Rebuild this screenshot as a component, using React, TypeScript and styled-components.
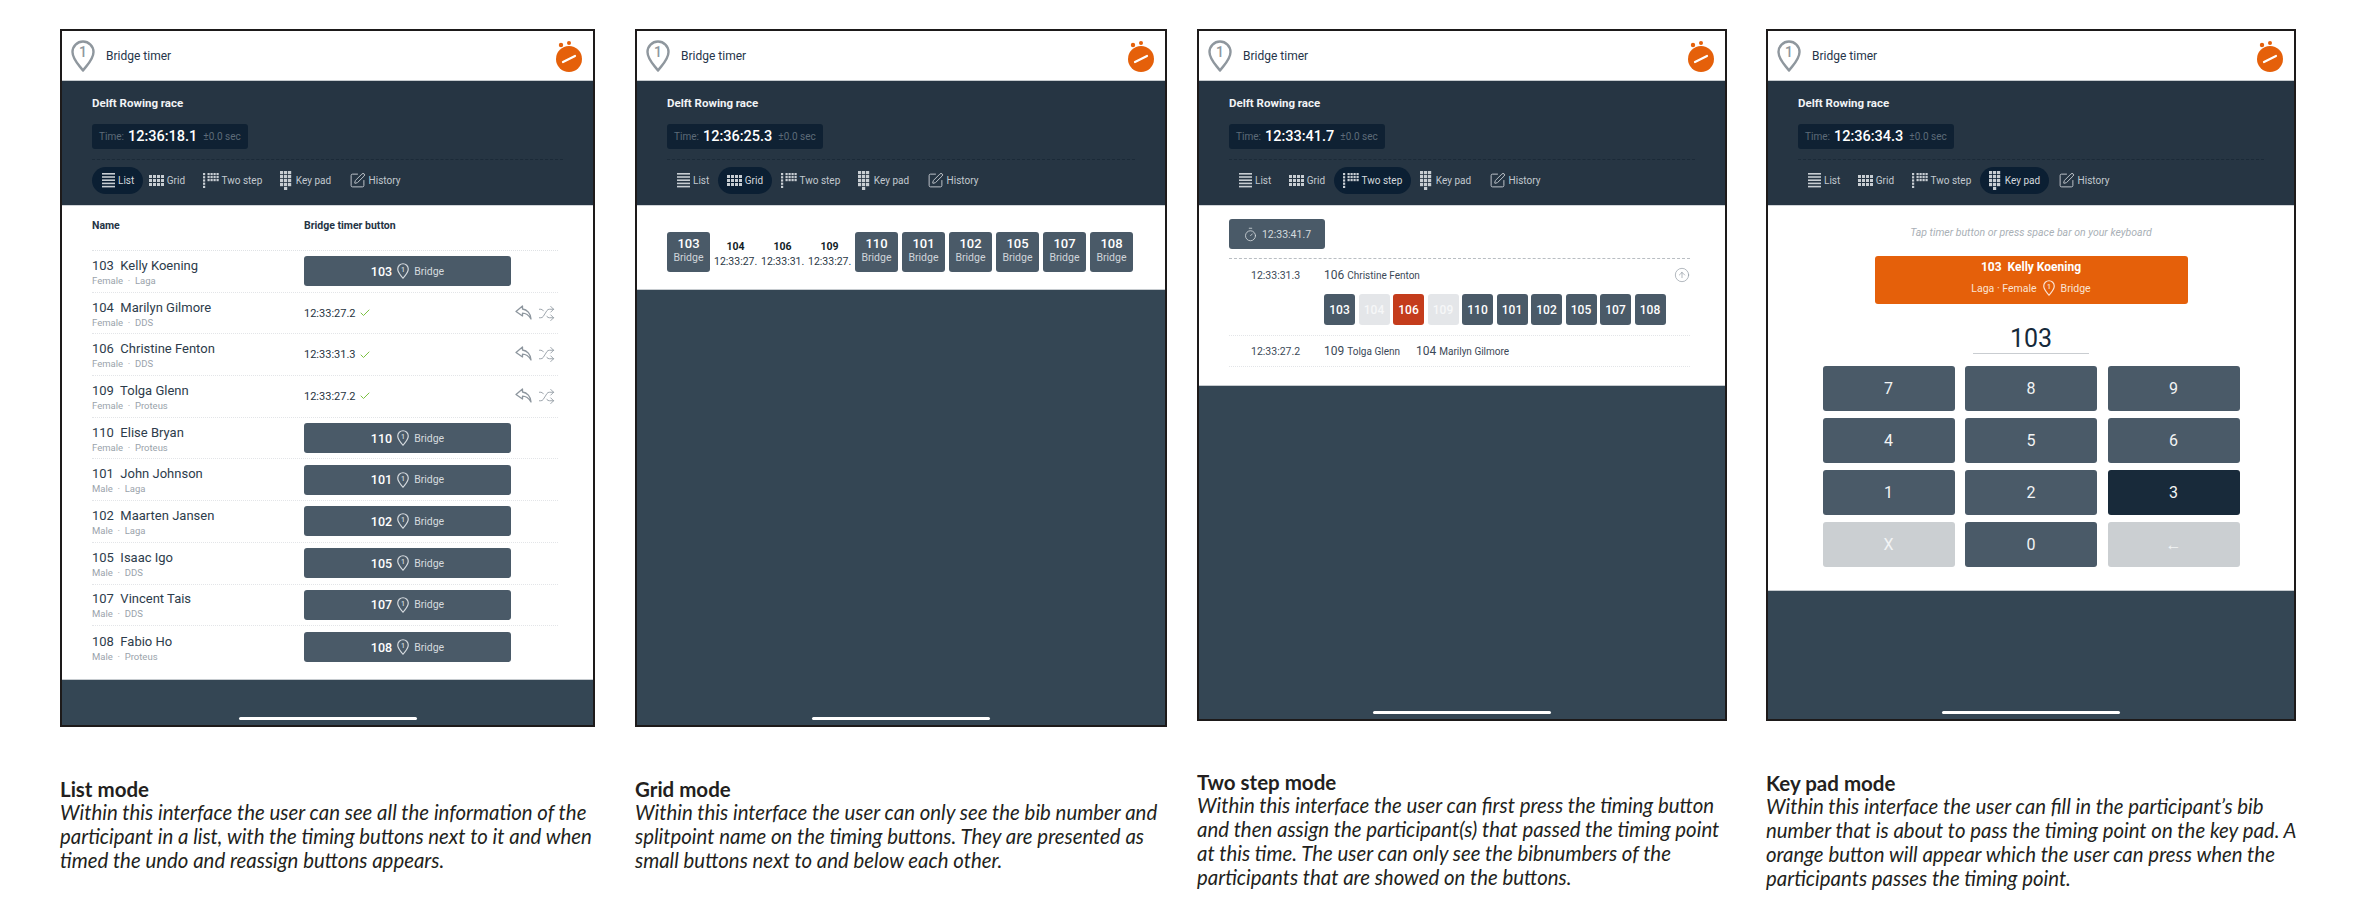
import React from "react";
import styled, { createGlobalStyle } from "styled-components";
import { Check, CircleArrowUp, Shuffle, SquarePen, Timer } from "lucide-react";

const GlobalStyle = createGlobalStyle`
  html, body {
    margin: 0;
    padding: 0;
    background: #fff;
    font-family: Roboto, "Liberation Sans", sans-serif;
  }
  * { box-sizing: border-box; }
`;

type ModeId = "list" | "grid" | "two" | "keypad";

type Participant = {
  bib: number;
  name: string;
  info: string;
  timed?: string;
};

const participants: Participant[] = [
  { bib: 103, name: "Kelly Koening", info: "Female  ·  Laga" },
  { bib: 104, name: "Marilyn Gilmore", info: "Female  ·  DDS", timed: "12:33:27.2" },
  { bib: 106, name: "Christine Fenton", info: "Female  ·  DDS", timed: "12:33:31.3" },
  { bib: 109, name: "Tolga Glenn", info: "Female  ·  Proteus", timed: "12:33:27.2" },
  { bib: 110, name: "Elise Bryan", info: "Female  ·  Proteus" },
  { bib: 101, name: "John Johnson", info: "Male  ·  Laga" },
  { bib: 102, name: "Maarten Jansen", info: "Male  ·  Laga" },
  { bib: 105, name: "Isaac Igo", info: "Male  ·  DDS" },
  { bib: 107, name: "Vincent Tais", info: "Male  ·  DDS" },
  { bib: 108, name: "Fabio Ho", info: "Male  ·  Proteus" },
];

const Page = styled.div`
  display: flex;
  align-items: flex-start;
  width: 2361px;
  height: 923px;
  padding: 29px 0 0 60px;
  overflow: hidden;
`;

const Column = styled.section<{ $width: number; $after: number }>`
  flex: none;
  width: ${(p) => p.$width}px;
  margin-right: ${(p) => p.$after}px;
`;

const Frame = styled.div<{ $height: number }>`
  display: flex;
  flex-direction: column;
  height: ${(p) => p.$height}px;
  border: 2px solid #1d1a1a;
  background: #344654;
`;

const TopBar = styled.header`
  display: flex;
  align-items: center;
  flex: none;
  height: 50px;
  padding: 0 9px 0 9px;
  background: #fff;
  border-bottom: 1px solid #c6cbcf;
`;

const TopTitle = styled.span`
  margin-left: 11px;
  flex: 1;
  font-size: 12px;
  font-weight: 400;
  color: #26354a;
`;

const RaceHeader = styled.div`
  flex: none;
  height: 125px;
  padding: 14px 30px 0;
  background: #263543;
  border-bottom: 1px solid #d0d4d8;
`;

const RaceTitle = styled.div`
  font-size: 11.5px;
  line-height: 16px;
  font-weight: 700;
  color: #f1f3f5;
`;

const TimeBox = styled.div`
  display: inline-flex;
  align-items: center;
  height: 25px;
  margin-top: 13px;
  padding: 0 7px;
  border-radius: 3px;
  background: #0f2133;
  font-size: 10px;
  color: #5d6b78;
`;

const TimeValue = styled.strong`
  margin: 0 6px 0 4px;
  font-size: 14.5px;
  font-weight: 500;
  color: #fff;
`;

const Divider = styled.div`
  height: 1px;
  margin-top: 10px;
  border-top: 1px dashed #1b2a38;
`;

const Tabs = styled.nav`
  display: flex;
  margin-top: 7px;
`;

const Tab = styled.div<{ $active: boolean }>`
  display: flex;
  align-items: center;
  gap: 3px;
  height: 27px;
  padding: 0 9px 0 8.5px;
  border-radius: 14px;
  font-size: 10px;
  color: ${(p) => (p.$active ? "#d4d9dd" : "#c2c9cf")};
  background: ${(p) => (p.$active ? "#0b1f33" : "transparent")};
  svg {
    flex: none;
  }
  &:first-child {
    padding-left: 10px;
    margin-right: ${(p) => (p.$active ? "-3px" : "0")};
  }
`;

const Content = styled.main`
  flex: none;
  background: #fff;
  border-bottom: 1px solid #c6cbcf;
`;

const Footer = styled.footer`
  flex: 1;
  display: flex;
  align-items: flex-end;
  justify-content: center;
  padding-bottom: 5px;
`;

const HomeBar = styled.div`
  width: 178px;
  height: 3px;
  border-radius: 2px;
  background: #fff;
`;

/* list mode */
const ListWrap = styled.div`
  height: 473px;
  padding: 0 35px 0 30px;
`;

const ListHead = styled.div`
  display: grid;
  grid-template-columns: 212px 1fr;
  align-items: center;
  height: 45px;
  padding-bottom: 6px;
  border-bottom: 1px dotted #dfe2e5;
  font-size: 10.5px;
  font-weight: 700;
  color: #253445;
`;

const Row = styled.div`
  display: grid;
  grid-template-columns: 212px 207px 1fr;
  align-items: center;
  height: 41.7px;
  border-bottom: 1px dotted #e3e5e8;
  &:last-child {
    border-bottom: 0;
  }
`;

const RowName = styled.div`
  padding-top: 2px;
  font-size: 13px;
  line-height: 16px;
  color: #2d3c4b;
  white-space: pre;
`;

const RowInfo = styled.div`
  font-size: 9.5px;
  line-height: 12px;
  margin-top: 1px;
  color: #9aa3ab;
  white-space: pre;
`;

const TimingButton = styled.div`
  display: flex;
  align-items: center;
  justify-content: center;
  gap: 5px;
  height: 30px;
  border-radius: 3px;
  background: #4a5a68;
  font-size: 10.5px;
  color: #d5dade;
  b {
    font-size: 12.5px;
    font-weight: 500;
    color: #fff;
  }
`;

const TimedText = styled.div`
  display: flex;
  align-items: center;
  gap: 3px;
  font-size: 11px;
  color: #26343f;
  svg {
    color: #7cc242;
  }
`;

const RowActions = styled.div`
  display: flex;
  justify-content: flex-end;
  gap: 6px;
  padding-right: 3px;
  color: #8d969e;
`;

/* grid mode */
const GridWrap = styled.div`
  display: flex;
  gap: 4px;
  height: 83px;
  padding: 26px 0 0 30px;
`;

const GridButton = styled.div`
  flex: none;
  width: 43px;
  height: 40px;
  padding-top: 4px;
  border-radius: 3px;
  background: #4a5a68;
  text-align: center;
  font-size: 10.5px;
  line-height: 13px;
  color: #cfd5da;
  b {
    display: block;
    font-size: 13px;
    line-height: 15px;
    font-weight: 500;
    color: #fff;
  }
`;

const GridTimed = styled.div`
  flex: none;
  width: 43px;
  padding-top: 8px;
  overflow: hidden;
  text-align: center;
  white-space: nowrap;
  font-size: 10.5px;
  line-height: 13px;
  color: #2a3845;
  b {
    display: block;
    margin-bottom: 2px;
    font-size: 10.5px;
    color: #111c26;
  }
`;

/* two step mode */
const TwoWrap = styled.div`
  height: 179px;
  padding: 13px 35px 0 30px;
`;

const StartButton = styled.div`
  display: flex;
  align-items: center;
  justify-content: center;
  gap: 4px;
  width: 96px;
  height: 30px;
  border-radius: 3px;
  background: #4a5a68;
  font-size: 10.5px;
  color: #d5dade;
`;

const DashLine = styled.div`
  margin-top: 9px;
  border-top: 1px dashed #b9bec3;
`;

const StepRow = styled.div`
  display: grid;
  grid-template-columns: 95px 1fr auto;
  align-items: center;
  padding-top: 8px;
  font-size: 10.5px;
  color: #3b4957;
`;

const StepTime = styled.div`
  padding-left: 22px;
  font-size: 10.5px;
  color: #3b4957;
`;

const StepNames = styled.div`
  display: flex;
  gap: 16px;
  font-size: 10px;
  color: #3b4957;
  b {
    font-size: 12px;
    font-weight: 400;
    margin-right: 3px;
  }
`;

const BibRow = styled.div`
  display: flex;
  gap: 3.5px;
  margin: 11px 0 0 95px;
  padding-bottom: 10px;
`;

const StepLine = styled.div`
  border-top: 1px dotted #e3e5e8;
`;

const Bib = styled.div<{ $tone: "normal" | "done" | "picked" }>`
  display: flex;
  align-items: center;
  justify-content: center;
  width: 31px;
  height: 31px;
  border-radius: 3px;
  font-size: 12px;
  font-weight: 500;
  color: ${(p) => (p.$tone === "done" ? "#f6f7f8" : "#fff")};
  background: ${(p) =>
    p.$tone === "done" ? "#e4e6e9" : p.$tone === "picked" ? "#c43c1c" : "#4a5a68"};
`;

const StepLastRow = styled(StepRow)`
  height: 31px;
  padding-top: 0;
  border-bottom: 1px dotted #e3e5e8;
`;

/* key pad mode */
const PadWrap = styled.div`
  height: 384px;
  padding-top: 20px;
  display: flex;
  flex-direction: column;
  align-items: center;
`;

const PadHint = styled.div`
  font-size: 10.5px;
  line-height: 14px;
  font-style: italic;
  color: #a9b0b6;
`;

const OrangeButton = styled.div`
  width: 313px;
  height: 48px;
  margin-top: 16px;
  padding-top: 3px;
  border-radius: 3px;
  background: #e5600a;
  text-align: center;
  color: #fff;
`;

const OrangeName = styled.div`
  font-size: 12px;
  line-height: 16px;
  font-weight: 700;
  white-space: pre;
`;

const OrangeInfo = styled.div`
  display: flex;
  align-items: center;
  justify-content: center;
  gap: 6px;
  margin-top: 5px;
  font-size: 10.5px;
  color: #fbe3d3;
`;

const PadInput = styled.div`
  display: flex;
  align-items: flex-end;
  justify-content: center;
  width: 116px;
  height: 40px;
  margin-top: 10px;
  border-bottom: 1px solid #c9cdd1;
  font-size: 25px;
  line-height: 28px;
  color: #16293a;
`;

const PadKeys = styled.div`
  display: grid;
  grid-template-columns: repeat(3, 132px);
  gap: 7.5px 10.5px;
  margin-top: 12px;
`;

const PadKey = styled.div<{ $tone: "normal" | "off" | "pressed" }>`
  display: flex;
  align-items: center;
  justify-content: center;
  height: 44.5px;
  border-radius: 3px;
  font-size: 16px;
  color: #f2f4f5;
  background: ${(p) =>
    p.$tone === "off" ? "#cbcfd2" : p.$tone === "pressed" ? "#182a3a" : "#4a5a68"};
`;

/* captions */
const Caption = styled.div<{ $top: number }>`
  margin-top: ${(p) => p.$top}px;
  font-family: Lato, "Open Sans", sans-serif;
  color: #231f20;
  white-space: nowrap;
`;

const CaptionTitle = styled.div`
  font-size: 20.5px;
  line-height: 24px;
  font-weight: 700;
`;

const CaptionBody = styled.div`
  font-size: 20.4px;
  line-height: 23.9px;
  font-style: italic;
`;

const PinIcon: React.FC<{ size?: number; color?: string }> = ({ size = 16, color = "#fff" }) => (
  <svg width={(size * 3) / 4} height={size} viewBox="0 0 24 32" fill="none">
    <path
      d="M12 30.5 C8 25 1.5 19.5 1.5 12 A10.5 10.5 0 0 1 22.5 12 C22.5 19.5 16 25 12 30.5 Z"
      stroke={color}
      strokeWidth="2.4"
      strokeLinejoin="round"
    />
    <text x="12" y="17" textAnchor="middle" fontSize="14" fontWeight="500" fontFamily="Roboto, sans-serif" fill={color}>
      1
    </text>
  </svg>
);

const StopwatchLogo = () => (
  <svg width="30" height="34" viewBox="0 0 30 34">
    <circle cx="15" cy="20" r="13" fill="#e5600a" />
    <circle cx="7" cy="6" r="2.2" fill="#e5600a" />
    <circle cx="15" cy="4" r="2" fill="#e5600a" />
    <path d="M9 23 L21 17" stroke="#fff" strokeWidth="2.2" strokeLinecap="round" />
  </svg>
);

const UndoIcon = () => (
  <svg width="17" height="15" viewBox="0 0 17 15" fill="none" stroke="currentColor" strokeWidth="1.3" strokeLinejoin="round">
    <path d="M7.5 1 L1 6.5 L7.5 11 V8.2 C10.8 8.2 13.6 10 16 14 C15.8 8.5 12 4.6 7.5 4 Z" />
  </svg>
);

const Squares: React.FC<{ cells: [number, number][]; size: number; w: number; h: number }> = ({ cells, size, w, h }) => (
  <svg width={w} height={h} viewBox={`0 0 ${w} ${h}`} fill="#c8ced3">
    {cells.map(([x, y]) => (
      <rect key={`${x}-${y}`} x={x} y={y} width={size} height={size} />
    ))}
  </svg>
);

const makeCells = (cols: number, rows: number, step: number, ox = 0, oy = 0) => {
  const out: [number, number][] = [];
  for (let r = 0; r < rows; r++) {
    for (let c = 0; c < cols; c++) out.push([ox + c * step, oy + r * step]);
  }
  return out;
};

const ListIcon = () => (
  <svg width="13" height="16" viewBox="0 0 13 16" fill="#c8ced3">
    {[0, 3.2, 6.4, 9.6, 12.8].map((y) => (
      <rect key={y} x="0" y={y} width="13" height="1.6" />
    ))}
  </svg>
);

const GridIcon = () => <Squares cells={makeCells(4, 3, 4, 0, 0)} size={3} w={15} h={11} />;

const TwoStepIcon = () => (
  <Squares
    cells={[
      ...makeCells(1, 5, 3.2, 0, 0),
      ...makeCells(4, 3, 3, 4.5, 0),
    ]}
    size={2.2}
    w={16}
    h={16}
  />
);

const KeyPadIcon = () => (
  <Squares cells={[...makeCells(3, 4, 4, 0, 0), [4, 16]]} size={3.2} w={13} h={19} />
);

const tabs: { id: ModeId | "history"; label: string; icon: React.ReactNode }[] = [
  { id: "list", label: "List", icon: <ListIcon /> },
  { id: "grid", label: "Grid", icon: <GridIcon /> },
  { id: "two", label: "Two step", icon: <TwoStepIcon /> },
  { id: "keypad", label: "Key pad", icon: <KeyPadIcon /> },
  { id: "history", label: "History", icon: <SquarePen size={17} color="#c8ced3" strokeWidth={1.3} /> },
];

const ListMode = () => (
  <ListWrap>
    <ListHead>
      <span>Name</span>
      <span>Bridge timer button</span>
    </ListHead>
    {participants.map((p) => (
      <Row key={p.bib}>
        <div>
          <RowName>{`${p.bib}  ${p.name}`}</RowName>
          <RowInfo>{p.info}</RowInfo>
        </div>
        {p.timed ? (
          <TimedText>
            {p.timed} <Check size={12} strokeWidth={2} />
          </TimedText>
        ) : (
          <TimingButton>
            <b>{p.bib}</b>
            <PinIcon size={16} color="#d5dade" />
            Bridge
          </TimingButton>
        )}
        {p.timed && (
          <RowActions>
            <UndoIcon />
            <Shuffle size={17} strokeWidth={1.2} />
          </RowActions>
        )}
      </Row>
    ))}
  </ListWrap>
);

const GridMode = () => (
  <GridWrap>
    {participants.map((p) =>
      p.timed ? (
        <GridTimed key={p.bib}>
          <b>{p.bib}</b>
          {p.timed}
        </GridTimed>
      ) : (
        <GridButton key={p.bib}>
          <b>{p.bib}</b>
          Bridge
        </GridButton>
      )
    )}
  </GridWrap>
);

const TwoStepMode = () => (
  <TwoWrap>
    <StartButton>
      <Timer size={15} strokeWidth={1.3} />
      12:33:41.7
    </StartButton>
    <DashLine />
    <StepRow>
      <StepTime>12:33:31.3</StepTime>
      <StepNames>
        <span>
          <b>106</b>Christine Fenton
        </span>
      </StepNames>
      <CircleArrowUp size={16} strokeWidth={1} color="#8d969e" />
    </StepRow>
    <BibRow>
      {participants.map((p) => (
        <Bib key={p.bib} $tone={p.bib === 106 ? "picked" : p.bib === 104 || p.bib === 109 ? "done" : "normal"}>
          {p.bib}
        </Bib>
      ))}
    </BibRow>
    <StepLine />
    <StepLastRow>
      <StepTime>12:33:27.2</StepTime>
      <StepNames>
        <span>
          <b>109</b>Tolga Glenn
        </span>
        <span>
          <b>104</b>Marilyn Gilmore
        </span>
      </StepNames>
    </StepLastRow>
  </TwoWrap>
);

const keys = ["7", "8", "9", "4", "5", "6", "1", "2", "3", "X", "0", "←"];

const KeyPadMode = () => (
  <PadWrap>
    <PadHint>Tap timer button or press space bar on your keyboard</PadHint>
    <OrangeButton>
      <OrangeName>103  Kelly Koening</OrangeName>
      <OrangeInfo>
        Laga · Female
        <PinIcon size={16} color="#fbe3d3" />
        Bridge
      </OrangeInfo>
    </OrangeButton>
    <PadInput>103</PadInput>
    <PadKeys>
      {keys.map((k) => (
        <PadKey key={k} $tone={k === "X" || k === "←" ? "off" : k === "3" ? "pressed" : "normal"}>
          {k}
        </PadKey>
      ))}
    </PadKeys>
  </PadWrap>
);

type ScreenProps = {
  mode: ModeId;
  time: string;
  width: number;
  after: number;
  height: number;
  captionTop: number;
  title: string;
  lines: string[];
  children: React.ReactNode;
};

const Screen: React.FC<ScreenProps> = ({ mode, time, width, after, height, captionTop, title, lines, children }) => (
  <Column $width={width} $after={after}>
    <Frame $height={height}>
      <TopBar>
        <PinIcon size={32} color="#8f979e" />
        <TopTitle>Bridge timer</TopTitle>
        <StopwatchLogo />
      </TopBar>
      <RaceHeader>
        <RaceTitle>Delft Rowing race</RaceTitle>
        <TimeBox>
          Time:<TimeValue>{time}</TimeValue>±0.0 sec
        </TimeBox>
        <Divider />
        <Tabs>
          {tabs.map((t) => (
            <Tab key={t.id} $active={t.id === mode}>
              {t.icon}
              {t.label}
            </Tab>
          ))}
        </Tabs>
      </RaceHeader>
      <Content>{children}</Content>
      <Footer>
        <HomeBar />
      </Footer>
    </Frame>
    <Caption $top={captionTop}>
      <CaptionTitle>{title}</CaptionTitle>
      <CaptionBody>
        {lines.map((l) => (
          <div key={l}>{l}</div>
        ))}
      </CaptionBody>
    </Caption>
  </Column>
);

export default function App() {
  return (
    <>
      <GlobalStyle />
      <Page>
        <Screen
          mode="list"
          time="12:36:18.1"
          width={535}
          after={40}
          height={698}
          captionTop={50}
          title="List mode"
          lines={[
            "Within this interface the user can see all the information of the",
            "participant in a list, with the timing buttons next to it and when",
            "timed the undo and reassign buttons appears.",
          ]}
        >
          <ListMode />
        </Screen>
        <Screen
          mode="grid"
          time="12:36:25.3"
          width={532}
          after={30}
          height={698}
          captionTop={50}
          title="Grid mode"
          lines={[
            "Within this interface the user can only see the bib number and",
            "splitpoint name on the timing buttons. They are presented as",
            "small buttons next to and below each other.",
          ]}
        >
          <GridMode />
        </Screen>
        <Screen
          mode="two"
          time="12:33:41.7"
          width={530}
          after={39}
          height={692}
          captionTop={49}
          title="Two step mode"
          lines={[
            "Within this interface the user can first press the timing button",
            "and then assign the participant(s) that passed the timing point",
            "at this time. The user can only see the bibnumbers of the",
            "participants that are showed on the buttons.",
          ]}
        >
          <TwoStepMode />
        </Screen>
        <Screen
          mode="keypad"
          time="12:36:34.3"
          width={530}
          after={0}
          height={692}
          captionTop={50}
          title="Key pad mode"
          lines={[
            "Within this interface the user can fill in the participant’s bib",
            "number that is about to pass the timing point on the key pad. A",
            "orange button will appear which the user can press when the",
            "participants passes the timing point.",
          ]}
        >
          <KeyPadMode />
        </Screen>
      </Page>
    </>
  );
}
